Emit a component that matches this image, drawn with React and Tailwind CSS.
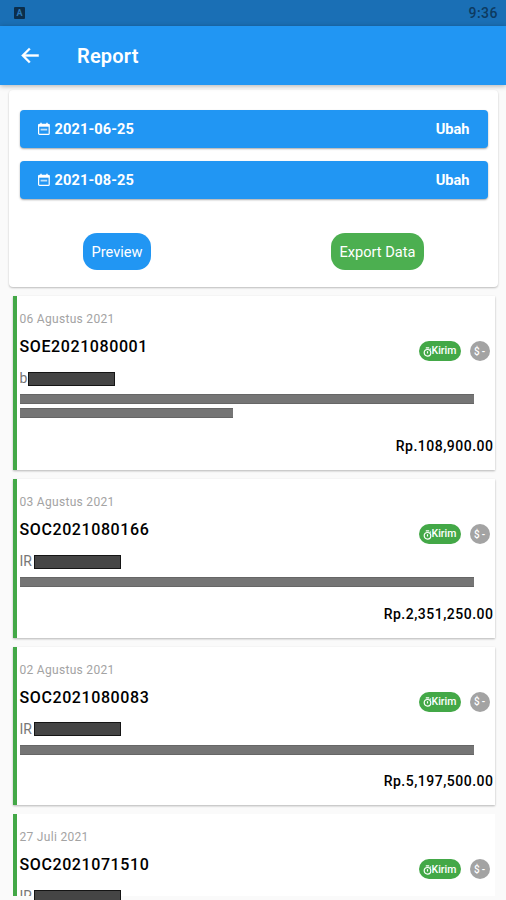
const orders = [
    { date: '06 Agustus 2021', code: 'SOE2021080001', name: 'b', total: 'Rp.108,900.00', lines: 2 },
    { date: '03 Agustus 2021', code: 'SOC2021080166', name: 'IR', total: 'Rp.2,351,250.00', lines: 1 },
    { date: '02 Agustus 2021', code: 'SOC2021080083', name: 'IR', total: 'Rp.5,197,500.00', lines: 1 },
    { date: '27 Juli 2021', code: 'SOC2021071510', name: 'IR', total: '', lines: 1, last: true },
];

export default function App() {
    return (
        <div className="w-[506px] h-[900px] overflow-hidden bg-[#fafafa] font-['Roboto',sans-serif] flex flex-col">
            <StatusBar />
            <header className="relative z-10 h-[59px] shrink-0 bg-[#2196f3] text-white flex items-center pl-[18px] shadow-[0_1px_5px_rgba(0,0,0,0.3)]">
                <svg className="w-6 h-6" viewBox="0 0 24 24" fill="currentColor">
                    <path d="M20.6 10.5H7.2l5.2-5.2L11 3.9 3.4 11.5l7.6 7.6 1.4-1.4-5.2-5.2h13.4v-2z" stroke="currentColor" strokeWidth=".4" />
                </svg>
                <h1 className="ml-[35px] text-[20px] leading-6 font-semibold tracking-[0.2px]">Report</h1>
            </header>
            <Filter />
            <main className="flex flex-col gap-[9px] mt-[9px] pl-[13px] pr-[11px]">
                {orders.map((order) => <OrderCard key={order.code} order={order} />)}
            </main>
        </div>
    );
}

function StatusBar() {
    return (
        <div className="h-[26px] shrink-0 bg-[#1a6fb5] text-[#0d3a60] flex items-center justify-between pl-[14px] pr-[8px]">
            <span className="w-[11px] h-[12px] rounded-[1px] bg-[#0b2e4c] text-[#2a78b8] text-[9px] leading-[12px] font-bold text-center">A</span>
            <span className="text-[14px] leading-4 tracking-[0.5px] font-medium">9:36</span>
        </div>
    );
}

function Filter() {
    return (
        <section className="ml-[9px] mr-[8px] mt-[5px] h-[197px] shrink-0 bg-white rounded-[4px] shadow-[0_1px_2px_rgba(0,0,0,0.25)] pt-[20px] pl-[10.5px] pr-[10.5px]">
            <div className="flex flex-col gap-[13px]">
                <DateButton date="2021-06-25" />
                <DateButton date="2021-08-25" />
            </div>
            <div className="flex justify-between mt-[34px] px-[63.5px]">
                <button className="w-[68px] h-[37px] rounded-[14px] bg-[#2196f3] text-white text-[14.6px] pt-[2px]">Preview</button>
                <button className="w-[93px] h-[37px] rounded-[14px] bg-[#4caf50] text-white text-[14.6px] pt-[2px] whitespace-nowrap">Export Data</button>
            </div>
        </section>
    );
}

function DateButton({ date }) {
    return (
        <button className="h-[38px] rounded-[4px] bg-[#2196f3] text-white text-[14.6px] font-bold flex items-center justify-between pt-[2px] pl-[17px] pr-[18px] shadow-[0_1px_2px_rgba(0,0,0,0.35)]">
            <span className="flex items-center">
                <svg className="w-[14px] h-[14px] mr-[4px] -mt-px" viewBox="0 0 14 14" fill="none" stroke="currentColor">
                    <rect x="1.6" y="2.4" width="10.6" height="10" rx="1" strokeWidth="1.2" />
                    <path d="M1.5 3.4h11" strokeWidth="2.6" />
                    <path d="M4 .7v2M10 .7v2" strokeWidth="1.4" />
                    <path d="M3.6 7.6h6.6" strokeWidth="1.8" strokeOpacity=".7" />
                </svg>
                <span className="tracking-[0.1px]">{date}</span>
            </span>
            <span>Ubah</span>
        </button>
    );
}

function OrderCard({ order }) {
    return (
        <article className={`flex shrink-0 ${order.last ? 'h-[82px]' : order.lines === 2 ? 'h-[174px]' : 'h-[158.7px]'} bg-white border-l-4 border-[#43a847] ${order.last ? '' : 'shadow-[0_1px_2px_rgba(0,0,0,0.28)]'}`}>
            <div className="flex-1 flex flex-col pl-[2.5px] pr-[1.5px] pt-[15px]">
                <p className="text-[12px] leading-4 tracking-[0.3px] text-[#a3a3a3]">{order.date}</p>
                <div className="flex justify-between mt-[10px] h-[24px]">
                    <h2 className="text-[16px] leading-5 font-medium tracking-[0.6px] text-black">{order.code}</h2>
                    <Badges />
                </div>
                <div className="flex items-center mt-[10px] h-[15px] shrink-0">
                    <span className={`${order.name === 'b' ? 'w-[8.5px]' : 'w-[14px]'} ${order.last ? 'h-[7px]' : 'h-[15px]'} self-start overflow-hidden text-[14px] leading-[15px] text-[#777]`}>{order.name}</span>
                    <span className="w-[87px] h-[14px] bg-[#454545] border border-[#151515]" />
                </div>
                {!order.last && (
                    <>
                        <div className="flex flex-col gap-1 mt-2">
                            <span className="w-[454px] h-[10px] bg-[#757575] border-y border-[#666]" />
                            {order.lines === 2 && <span className="w-[213px] h-[10px] bg-[#757575] border-y border-[#666]" />}
                        </div>
                        <p className="mt-auto mb-[15px] text-right text-[14px] leading-[18px] font-medium tracking-[0.5px] text-black">{order.total}</p>
                    </>
                )}
            </div>
        </article>
    );
}

function Badges() {
    return (
        <div className="flex gap-[9px] mt-[4px] mr-[4px] text-white">
            <span className="w-[42px] h-[20px] rounded-full bg-[#43a847] flex items-center justify-center text-[10.5px] font-medium">
                <svg className="w-[9px] h-[11px]" viewBox="0 0 9 11" fill="none" stroke="currentColor" strokeWidth="1.2">
                    <circle cx="4.5" cy="6.8" r="3.3" />
                    <path d="M2.8 1.8h3.4M4.5 5.2v2.2M6.8 3.6l1-1" />
                </svg>
                Kirim
            </span>
            <span className="w-[20px] h-[20px] rounded-full bg-[#a3a3a3] flex items-center justify-center gap-[2px] text-[10px] font-medium">
                <span>$</span>
                <span>-</span>
            </span>
        </div>
    );
}
